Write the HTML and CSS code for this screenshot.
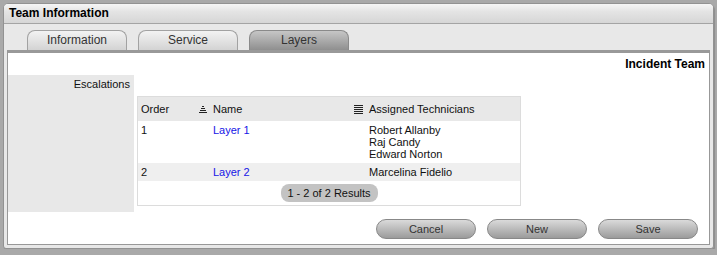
FILE: index.html
```html
<!DOCTYPE html>
<html lang="en">
<head>
    <meta charset="UTF-8">
    <title>Team Information</title>
    <link rel="stylesheet" href="styles.css">
</head>
<body>
    <div class="panel">
        <div class="panel-header">Team Information</div>
        <div class="tabs">
            <div class="tab">Information</div>
            <div class="tab">Service</div>
            <div class="tab active">Layers</div>
        </div>
        <div class="content">
            <div class="title">Incident Team</div>
            <div class="form-row">
                <div class="form-label">Escalations</div>
                <div class="form-value">
                    <table class="list">
                        <tr class="head">
                            <th class="col-order">
                                <div class="th-inner">
                                    <span>Order</span>
                                    <svg class="sort-icon" width="8" height="7" viewBox="0 0 8 7">
                                        <rect x="3" y="0" width="2" height="1"/>
                                        <rect x="2" y="2" width="4" height="1"/>
                                        <rect x="1" y="4" width="6" height="1"/>
                                        <rect x="0" y="6" width="8" height="1"/>
                                    </svg>
                                </div>
                            </th>
                            <th class="col-name">
                                <div class="th-inner">
                                    <span>Name</span>
                                    <svg class="sort-icon" width="9" height="9" viewBox="0 0 9 9">
                                        <rect x="0" y="0" width="9" height="1"/>
                                        <rect x="0" y="2" width="9" height="1"/>
                                        <rect x="0" y="4" width="9" height="1"/>
                                        <rect x="0" y="6" width="9" height="1"/>
                                        <rect x="0" y="8" width="9" height="1"/>
                                    </svg>
                                </div>
                            </th>
                            <th class="col-tech">Assigned Technicians</th>
                        </tr>
                        <tr class="row">
                            <td>1</td>
                            <td><a href="#">Layer 1</a></td>
                            <td>Robert Allanby<br>Raj Candy<br>Edward Norton</td>
                        </tr>
                        <tr class="row alt">
                            <td>2</td>
                            <td><a href="#">Layer 2</a></td>
                            <td>Marcelina Fidelio</td>
                        </tr>
                        <tr class="pager">
                            <td colspan="3"><span class="results">1 - 2 of 2 Results</span></td>
                        </tr>
                    </table>
                </div>
            </div>
            <div class="buttons">
                <button class="btn">Cancel</button>
                <button class="btn">New</button>
                <button class="btn">Save</button>
            </div>
        </div>
    </div>
</body>
</html>
```

FILE: styles.css
```css
body {
    margin: 0;
    background-color: #a9a9a9;
    font-family: "Liberation Sans", Arial, sans-serif;
    font-size: 11px;
    color: #111;
}
.panel {
    box-sizing: border-box;
    width: 711px;
    height: 246px;
    margin: 3px 0 0 3px;
    background-color: #e8e8e8;
    border: 1px solid #929292;
    border-radius: 5px 5px 3px 3px;
    box-shadow: 1px 2px 1px #8c8c8c;
}
.panel-header {
    height: 19px;
    line-height: 19px;
    padding-left: 5px;
    font-size: 12px;
    font-weight: bold;
    color: #000;
    background: linear-gradient(#f6f6f6, #e4e4e4 40%, #d6d6d6);
    border-bottom: 1px solid #a4a4a4;
    border-radius: 4px 4px 0 0;
}
.tabs {
    display: flex;
    gap: 11px;
    height: 20px;
    padding: 6px 0 0 23px;
}
.tab {
    box-sizing: border-box;
    width: 100px;
    height: 20px;
    line-height: 19px;
    font-size: 12px;
    text-align: center;
    color: #333;
    border: 1px solid #a2a2a2;
    border-bottom: none;
    border-radius: 8px 8px 0 0;
    background: linear-gradient(#f3f3f3, #d3d3d3);
}
.tab.active {
    border-color: #8a8a8a;
    background: linear-gradient(#c6c6c6, #8f8f8f);
}
.content {
    height: 191px;
    margin: 0 3px;
    background-color: white;
    border: 1px solid #989898;
    border-top: 3px solid #999;
}
.title {
    height: 22px;
    line-height: 22px;
    padding-right: 4px;
    text-align: right;
    font-size: 12px;
    font-weight: bold;
    color: #000;
}
.form-row {
    display: grid;
    grid-template-columns: 126px 1fr;
}
.form-label {
    background-color: #e8e8e8;
    padding: 3px 4px 0 0;
    line-height: 12px;
    text-align: right;
}
.form-value {
    padding: 21px 0 6px 3px;
}
.list {
    width: 384px;
    border-collapse: collapse;
    border: 1px solid #dcdcdc;
}
.list th, .list td {
    padding: 0 3px 0 3px;
    text-align: left;
    vertical-align: top;
    line-height: 12px;
}
.list th {
    height: 24px;
    vertical-align: middle;
    font-weight: normal;
    background-color: #e8e8e8;
}
.th-inner {
    display: flex;
    justify-content: space-between;
    align-items: center;
}
.col-order {
    width: 66px;
}
.col-name {
    width: 150px;
}
.sort-icon {
    display: block;
    fill: #222;
    shape-rendering: crispEdges;
}
.row td {
    padding-top: 3px;
    padding-bottom: 3px;
}
.row.alt td {
    background-color: #efefef;
}
.row a {
    color: #1515e6;
    text-decoration: none;
}
.pager td {
    text-align: center;
    padding: 3px 0;
}
.results {
    display: inline-block;
    width: 97px;
    height: 18px;
    line-height: 18px;
    border-radius: 8px;
    background-color: #c3c3c3;
    color: #111;
}
.buttons {
    display: flex;
    justify-content: flex-end;
    gap: 11px;
    margin-top: 7px;
    padding-right: 11px;
}
.btn {
    box-sizing: border-box;
    width: 100px;
    height: 20px;
    padding: 0;
    font-family: inherit;
    font-size: 11px;
    color: #333;
    border: 1px solid #888;
    border-radius: 10px;
    background: linear-gradient(#dadada, #9b9b9b);
}
```
